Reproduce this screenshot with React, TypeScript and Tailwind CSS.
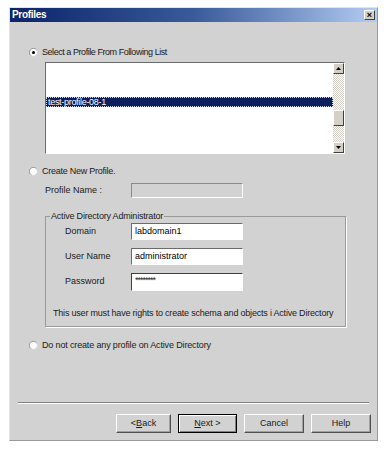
import React from 'react';

function Radio({ checked }: { checked?: boolean }) {
  return (
    <svg width="9" height="9" viewBox="0 0 12 12" className="shrink-0">
      <circle cx="6" cy="6" r="5.5" fill="#fff" stroke="#808080" />
      <path d="M2 10 A5.5 5.5 0 0 0 10 2" fill="none" stroke="#f0f0f0" strokeWidth="1" />
      {checked && <circle cx="6" cy="6" r="2" fill="#000" />}
    </svg>
  );
}

function Field({ value, disabled }: { value?: string; disabled?: boolean }) {
  return (
    <div
      className={`w-[112px] h-[17px] border border-t-[#6b6b6b] border-l-[#6b6b6b] border-r-white border-b-white flex items-center px-[3px] ${
        disabled ? 'bg-[#d2d2d2]' : 'bg-white'
      }`}
    >
      <span className="text-[9px] leading-none text-black">{value}</span>
    </div>
  );
}

function Btn({ label, u, rest, def, w }: { label?: string; u?: string; rest?: string; def?: boolean; w: string }) {
  return (
    <div
      className={`${w} h-[19px] flex items-center justify-center text-[9px] border ${
        def
          ? 'border-black shadow-[inset_1px_1px_0_#fff,inset_-1px_-1px_0_#808080]'
          : 'border-t-white border-l-white border-r-[#505050] border-b-[#505050] shadow-[inset_-1px_-1px_0_#a0a0a0]'
      }`}
    >
      {label}
      {u && <span className="underline">{u}</span>}
      {rest}
    </div>
  );
}

export default function App() {
  return (
    <div className="min-h-screen bg-white pt-[7px] pl-[9px] font-['Liberation_Sans',Arial,sans-serif] text-[#1a1a1a]">
      <div className="w-[369px] h-[434px] bg-[#d2d2d2] border border-l-[#e4e4e4] border-t-[#e4e4e4] border-r-[#9a9a9a] border-b-[#9a9a9a] flex flex-col">
        {/* title bar */}
        <div className="h-[14px] bg-gradient-to-r from-[#0a246a] via-[#3a5a9a] to-[#b4cdf2] flex items-center justify-between pl-[2px] pr-[2px]">
          <span className="text-white font-bold text-[10px] leading-none tracking-[-0.3px]">Profiles</span>
          <div className="w-[11px] h-[10px] bg-[#d4d0c8] border border-t-white border-l-white border-r-[#404040] border-b-[#404040] flex items-center justify-center text-[9px] font-bold leading-none text-black">
            ×
          </div>
        </div>

        <div className="flex-1 flex flex-col pl-[19px]">
          {/* select profile */}
          <div className="mt-[25px] flex items-center gap-[4px] h-[11px] text-[9px] tracking-[-0.45px]">
            <Radio checked />
            <span>Select a Profile From Following List</span>
          </div>

          <div className="ml-[16px] mt-[4px] w-[300px] h-[92px] border border-t-[#6b6b6b] border-l-[#6b6b6b] border-r-white border-b-white bg-white flex">
            <div className="flex-1 flex flex-col pt-[34px]">
              <div className="h-[10px] bg-[#0a1f5c] border border-dotted border-[#cfd6ea] flex items-center pl-[1px]">
                <span className="text-white text-[9px] leading-none tracking-[-0.3px]">test-profile-08-1</span>
              </div>
            </div>
            <div className="w-[11px] flex flex-col bg-[repeating-conic-gradient(#ffffff_0_25%,#d4d0c8_0_50%)] bg-[length:2px_2px]">
              <div className="h-[11px] bg-[#d4d0c8] border border-t-white border-l-white border-r-[#404040] border-b-[#404040] flex items-center justify-center">
                <svg width="5" height="3" viewBox="0 0 5 3"><path d="M2.5 0L5 3H0z" fill="#000" /></svg>
              </div>
              <div className="mt-[36px] h-[16px] bg-[#d4d0c8] border border-t-white border-l-white border-r-[#404040] border-b-[#404040]" />
              <div className="flex-1" />
              <div className="h-[11px] bg-[#d4d0c8] border border-t-white border-l-white border-r-[#404040] border-b-[#404040] flex items-center justify-center">
                <svg width="5" height="3" viewBox="0 0 5 3"><path d="M0 0H5L2.5 3z" fill="#000" /></svg>
              </div>
            </div>
          </div>

          {/* create new */}
          <div className="mt-[12px] flex items-center gap-[4px] h-[11px] text-[9px] tracking-[-0.25px]">
            <Radio />
            <span>Create New Profile.</span>
          </div>

          <div className="ml-[16px] mt-[6px] flex items-center text-[9px]">
            <span className="w-[86px]">Profile Name :</span>
            <div className="w-[112px] h-[15px] border border-t-[#8a8a8a] border-l-[#8a8a8a] border-r-white border-b-white bg-[#d2d2d2]" />
          </div>

          <fieldset className="ml-[16px] mt-[12px] w-[301px] h-[117px] border border-[#9a9a9a] shadow-[1px_1px_0_#fff]">
            <legend className="ml-[4px] px-[1px] text-[9px] leading-[12px] tracking-[-0.2px]">Active Directory Administrator</legend>
            <div className="flex flex-col gap-[8px] mt-[1px] pl-[19px] text-[9px]">
              <div className="flex items-center">
                <span className="w-[66px]">Domain</span>
                <Field value="labdomain1" />
              </div>
              <div className="flex items-center">
                <span className="w-[66px]">User Name</span>
                <Field value="administrator" />
              </div>
              <div className="flex items-center">
                <span className="w-[66px]">Password</span>
                <div className="w-[112px] h-[18px] bg-white border border-t-[#404040] border-l-[#404040] border-r-white border-b-white flex items-start px-[3px] pt-[2px]">
                  <span className="text-[9px] leading-none tracking-[-1px]">********</span>
                </div>
              </div>
            </div>
            <div className="mt-[16px] pl-[7px] text-[9px] tracking-[-0.2px]">
              This user must have rights to create schema and objects i Active Directory
            </div>
          </fieldset>

          <div className="mt-[13px] flex items-center gap-[4px] h-[11px] text-[9px] tracking-[-0.15px]">
            <Radio />
            <span>Do not create any profile on Active Directory</span>
          </div>

          <div className="flex-1" />
        </div>

        <div className="mx-[8px] border-t border-t-[#808080] border-b border-b-white" />
        <div className="flex justify-end items-center gap-[7px] pr-[6px] mt-[10px] mb-[7px]">
          <Btn w="w-[55px]" label="< " u="B" rest="ack" />
          <Btn w="w-[59px]" u="N" rest="ext >" def />
          <Btn w="w-[60px]" label="Cancel" />
          <Btn w="w-[60px]" label="Help" />
        </div>
      </div>
    </div>
  );
}
